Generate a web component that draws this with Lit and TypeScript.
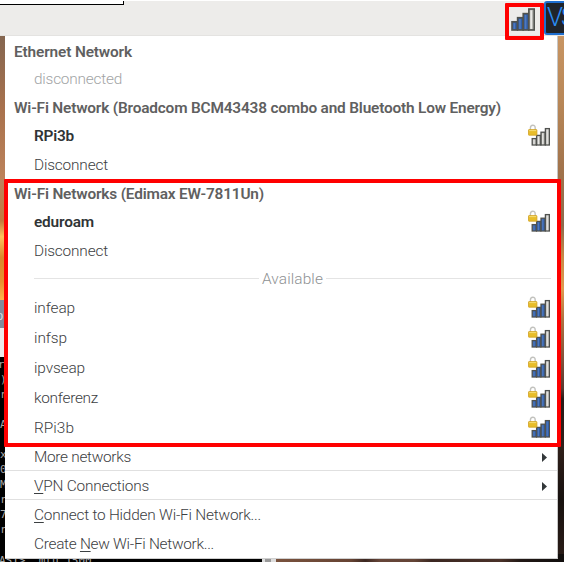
import { LitElement, html, css, svg, nothing } from "lit";
import { customElement, property } from "lit/decorators.js";

@customElement("signal-icon")
class SignalIcon extends LitElement {
  @property({ type: Number }) level = 3;
  @property({ type: Boolean }) locked = false;
  static styles = css`
    :host { display: block; }
    svg { display: block; width: 100%; height: 100%; }
  `;
  render() {
    const tops = [14.6, 11.4, 8.2, 4.6];
    const bars = tops.map((y, i) => {
      const on = i < this.level;
      const h = 21 - y;
      const x = 4.2 + i * 4.4;
      return svg`
        <rect x=${x} y=${y} width="4.2" height=${h} fill=${on ? "#2f5ea8" : "#b4b4b0"} stroke="#50524f" stroke-width="1.3"/>
        <path d="M${x + 1.8} ${20.2}V${y + 1}" stroke=${on ? "#5079bd" : "#e8e8e6"} stroke-width="1.3"/>`;
    });
    return html`<svg viewBox=${this.locked ? "0 0 22 22" : "3.4 3.8 18.8 18"} preserveAspectRatio="none">
      ${bars}
      ${this.locked
        ? svg`<path d="M2.4 7V4Q2.4 1.2 4.8 1.2T7.2 4V7" fill="none" stroke="#c2c2be" stroke-width="1.4"/>
              <rect x=".5" y="5.6" width="8.4" height="5.6" rx=".5" fill="#e8bd2a" stroke="#d0a224" stroke-width=".8"/>
              <path d="M1.2 6.6H8.2" stroke="#f5dc74"/>`
        : nothing}
    </svg>`;
  }
}

type Row = {
  baseline: number;
  kind: string;
  text: string;
  key?: string;
  before?: string;
  level?: number;
  arrow?: boolean;
  line?: boolean;
  width: number;
};

const rows: Row[] = [
  { baseline: 57, kind: "head", text: "Ethernet Network", width: 118 },
  { baseline: 84, kind: "item off", text: "disconnected", width: 88 },
  { baseline: 113, kind: "head", text: "Wi-Fi Network (Broadcom BCM43438 combo and Bluetooth Low Energy)", width: 487 },
  { baseline: 141, kind: "item active", text: "RPi3b", level: 0, width: 40 },
  { baseline: 170, kind: "item", text: "Disconnect", width: 74 },
  { baseline: 199, kind: "head", text: "Wi-Fi Networks (Edimax EW-7811Un)", width: 250 },
  { baseline: 227, kind: "item active", text: "eduroam", level: 3, width: 60 },
  { baseline: 256, kind: "item", text: "Disconnect", width: 74 },
  { baseline: 284, kind: "sep", text: "Available", width: 61 },
  { baseline: 313, kind: "item", text: "infeap", level: 3, width: 41 },
  { baseline: 343, kind: "item", text: "infsp", level: 3, width: 33 },
  { baseline: 373, kind: "item", text: "ipvseap", level: 3, width: 51 },
  { baseline: 403, kind: "item", text: "konferenz", level: 3, width: 64 },
  { baseline: 433, kind: "item", text: "RPi3b", level: 4, width: 40 },
  { baseline: 462, kind: "item", text: "More networks", arrow: true, line: true, width: 97 },
  { baseline: 491, kind: "item", key: "V", text: "PN Connections", arrow: true, line: true, width: 115 },
  { baseline: 520, kind: "item", key: "C", text: "onnect to Hidden Wi-Fi Network...", width: 227 },
  { baseline: 549, kind: "item", before: "Create ", key: "N", text: "ew Wi-Fi Network...", width: 180 },
];

@customElement("app-root")
class AppRoot extends LitElement {
  static styles = css`
    :host {
      display: block; position: relative; width: 564px; height: 562px; overflow: hidden;
      font: 300 15.4px/18px Roboto, sans-serif; color: #3c4042;
      background: #000;
    }
    .desktop { position: absolute; inset: 36px 0 0; display: flex; justify-content: space-between; }
    .left { width: 5px; overflow: hidden; }
    .sunset { height: 264px; background: linear-gradient(#846650, #a9724d 28%, #bd835b 55%, #c27a3c 70%, #ffc35a 76%, #d9892c 84%, #e8902e 93%, #ffb44c); }
    .title { height: 28px; background: #828a9a; color: #d5d9df; font: 13px/31px "Liberation Sans", sans-serif; text-indent: -4px; }
    .tool { height: 29px; background: #ececec; }
    .term { font: 11px/15px "DejaVu Sans Mono", monospace; color: #aaa; white-space: pre; text-indent: -2px; }
    .right { width: 7px; background: linear-gradient(#c89563, #b98858 12%, #a2744c 25%, #8e6a4c 36%, #c98846 42%, #e0994f 48%, #b07040 54%, #80503a 62%, #5b3a30 67%, #2b1b17 69%, #30201a 78%, #17110f 88%, #2b1d18); }
    .floor { position: absolute; left: 0; top: 554px; width: 100%; height: 8px; display: flex; overflow: hidden; }
    .console { width: 262px; background: #000; color: #aaa; font: 11px/13px "DejaVu Sans Mono", monospace; white-space: pre; text-indent: -1px; }
    .scroll { width: 14px; background: linear-gradient(90deg, #ddd 3px, #999 3px 9px, #ddd 9px); }
    .ground { flex: 1; background: linear-gradient(90deg, #79523d, #664333 26%, #3b2721 31%, #664538 36%, #644436 48%, #3b2721 54%, #4a3128 78%, #211815 85%, #110e0d); }
    .bar { position: relative; height: 36px; box-sizing: border-box; background: #edecea; border-top: 1px solid #fff; border-bottom: 1px solid #e4e3e1; }
    .tab { width: 123px; height: 3px; border: solid #000; border-width: 0 1px 1px 0; background: #fff; }
    .tray { position: absolute; left: 511px; top: 7px; width: 24px; height: 23px; }
    .vnc { position: absolute; left: 544px; top: 0; width: 30px; height: 34px; box-sizing: border-box; border: 2px solid #1f6fd0; border-radius: 3px; background: #20242a; color: #2a8cf4; font: 300 26px/29px Roboto, sans-serif; white-space: nowrap; letter-spacing: -2px; text-indent: 1px; }
    .menu { position: relative; box-sizing: border-box; width: 553px; height: 523px; margin-left: 5px; padding: 0 6px 0 29px; background: #fff; border-right: 1px solid #c6c6c6; border-bottom: 1px solid #cfcfcf; }
    .row { display: flex; align-items: flex-end; position: relative; }
    .label { white-space: nowrap; display: block; height: 14px; line-height: 18px; }
    .head { margin-left: -20px; font-weight: 600; color: #606060; }
    .active { font-weight: 600; color: #303436; }
    .off { color: #a2a4a5; }
    .sep { gap: 3px; color: #8e9193; }
    .sep::before, .sep::after { content: ""; flex: 1; height: 1px; margin-bottom: 5px; background: #e4e4e4; }
    u { text-decoration-thickness: 1px; text-underline-offset: 2px; text-decoration-skip-ink: none; }
    .lock { width: 22px; height: 22px; margin: 0 1px -5px auto; }
    .arrow { width: 5px; height: 9px; margin: 0 4px 0 auto; background: #33383a; clip-path: polygon(0 0, 100% 50%, 0 100%); }
    .line::after { content: ""; position: absolute; left: -29px; right: -6px; bottom: -9px; height: 1px; background: #e0e0e0; }
    .frame { position: absolute; border: 4px solid #f00; box-sizing: border-box; border-radius: 1px; }
    .frame-list { left: 4px; top: 179px; width: 557px; height: 268px; }
    .frame-tray { left: 505px; top: 3px; width: 39px; height: 37px; }
  `;

  // Fits every label to its nominal menu width through letter spacing.
  async firstUpdated() {
    await document.fonts.ready;
    this.renderRoot.querySelectorAll<HTMLElement>(".label").forEach((el, i) => {
      const gap = (rows[i].width - el.getBoundingClientRect().width) / el.textContent!.length;
      el.style.letterSpacing = `${gap}px`;
    });
  }

  row(r: Row, i: number) {
    const h = r.baseline - (i ? rows[i - 1].baseline : 36);
    return html`<div class="row ${r.kind} ${r.line ? "line" : ""}" style="height:${h}px"><span class="label">${r.before ?? ""}${r.key ? html`<u>${r.key}</u>` : nothing}${r.text}</span>${r.level !== undefined
        ? html`<signal-icon class="lock" .level=${r.level} locked></signal-icon>`
        : nothing}${r.arrow ? html`<i class="arrow"></i>` : nothing}</div>`;
  }

  render() {
    return html`
      <div class="desktop">
        <div class="left">
          <div class="sunset"></div>
          <div class="title">o</div>
          <div class="tool"></div>
          <div class="term">${"r\n)\nr\n\nA\n\nx\n0\nM\nr\n7\nr"}</div>
        </div>
        <div class="right"></div>
      </div>
      <div class="floor">
        <div class="console">AST&gt;  mtu 1500</div>
        <div class="scroll"></div>
        <div class="ground"></div>
      </div>
      <div class="bar">
        <div class="tab"></div>
        <signal-icon class="tray" level="3"></signal-icon>
        <div class="vnc">VS</div>
      </div>
      <div class="menu">${rows.map((r, i) => this.row(r, i))}</div>
      <div class="frame frame-list"></div>
      <div class="frame frame-tray"></div>
    `;
  }
}
